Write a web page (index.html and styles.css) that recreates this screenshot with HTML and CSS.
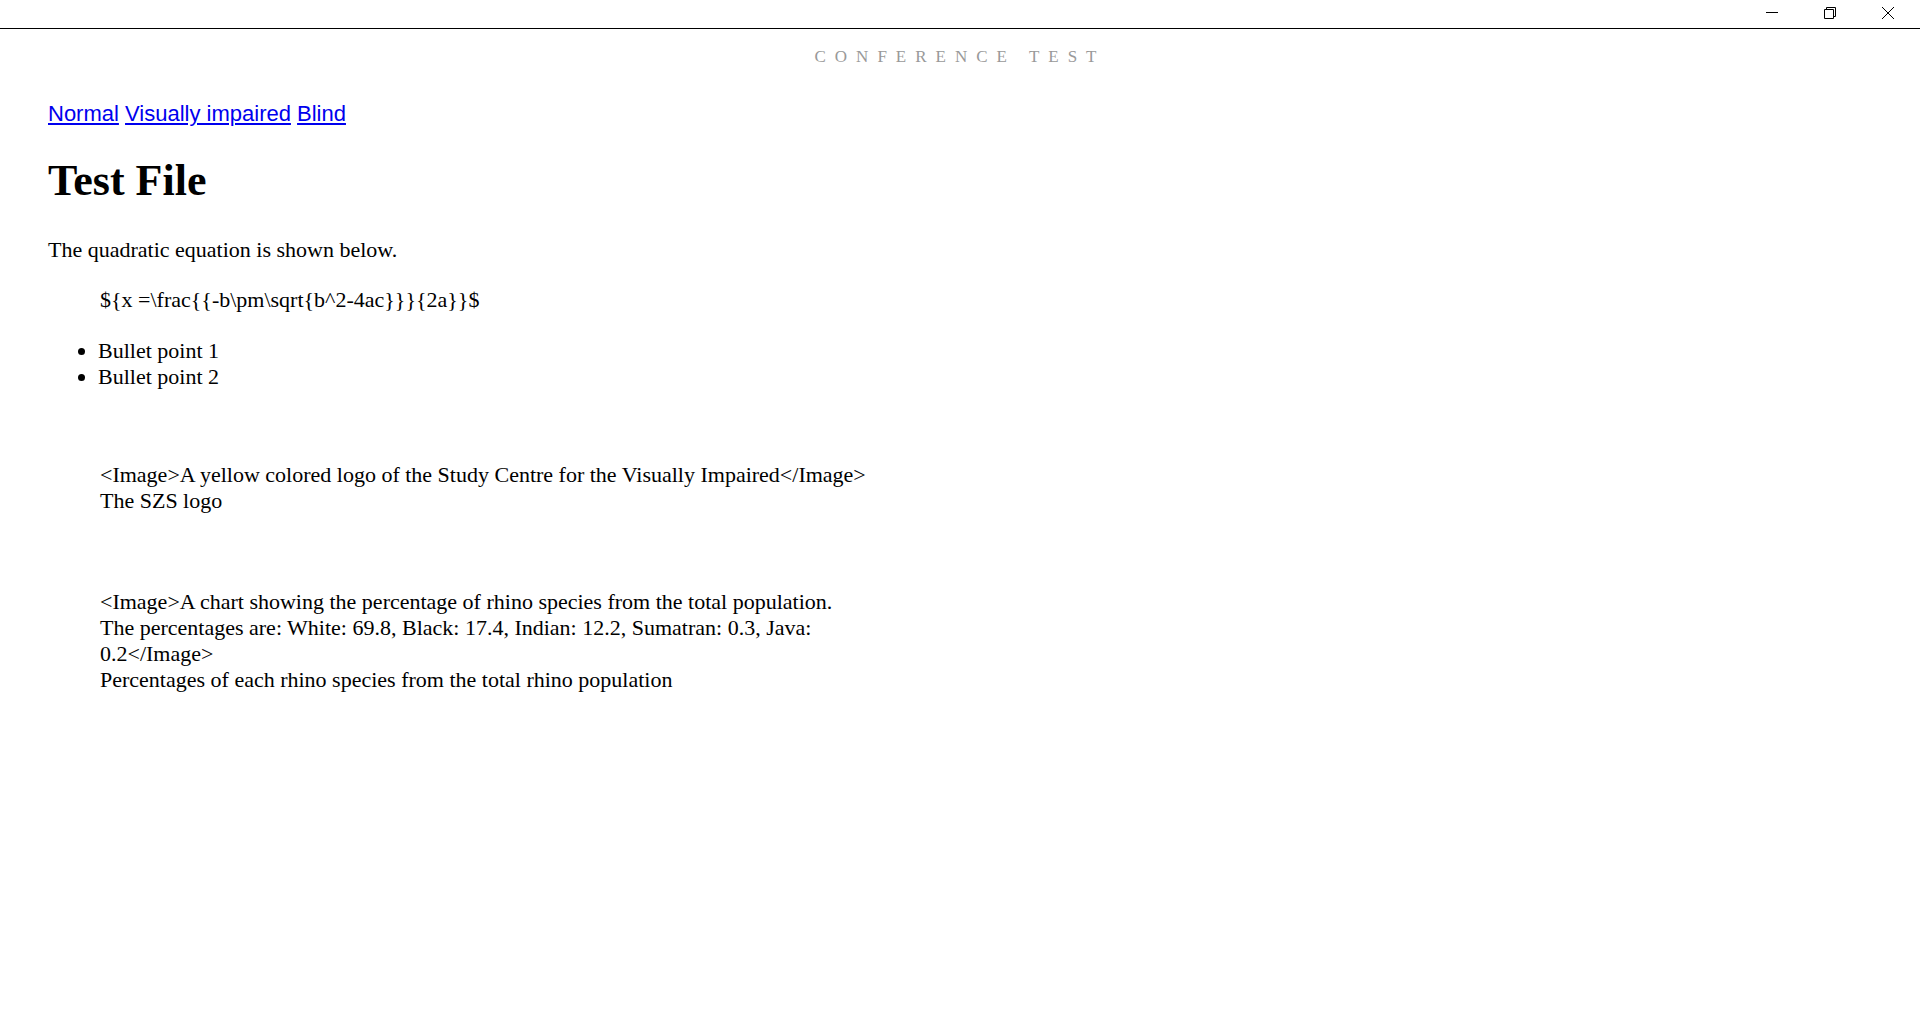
FILE: index.html
```html
<!DOCTYPE html>
<html lang="en">
<head>
<meta charset="utf-8">
<title>Conference Test</title>
<link rel="stylesheet" href="styles.css">
</head>
<body>
<header class="titlebar">
  <button class="window-button" type="button" aria-label="Minimize"><svg width="12" height="12" viewBox="0 0 12 12"><path d="M0 5.5H12"/></svg></button>
  <button class="window-button" type="button" aria-label="Restore"><svg width="12" height="12" viewBox="0 0 12 12"><path d="M.5 2.5H9.5V11.5H.5ZM2.5 2.5V.5H11.5V9.5H9.5"/></svg></button>
  <button class="window-button" type="button" aria-label="Close"><svg width="12" height="12" viewBox="0 0 12 12"><path d="M0 0L12 12M12 0L0 12"/></svg></button>
</header>
<div class="running-title">CONFERENCE TEST</div>
<main class="content">
  <nav class="views"><a href="#normal">Normal</a> <a href="#impaired">Visually impaired</a> <a href="#blind">Blind</a></nav>
  <h1>Test File</h1>
  <p>The quadratic equation is shown below.</p>
  <p class="equation">${x =\frac{{-b\pm\sqrt{b^2-4ac}}}{2a}}$</p>
  <ul>
    <li>Bullet point 1</li>
    <li>Bullet point 2</li>
  </ul>
  <figure>
    <div>&lt;Image&gt;A yellow colored logo of the Study Centre for the Visually Impaired&lt;/Image&gt;</div>
    <figcaption>The SZS logo</figcaption>
  </figure>
  <figure>
    <div>&lt;Image&gt;A chart showing the percentage of rhino species from the total population. The percentages are: White: 69.8, Black: 17.4, Indian: 12.2, Sumatran: 0.3, Java: 0.2&lt;/Image&gt;</div>
    <figcaption>Percentages of each rhino species from the total rhino population</figcaption>
  </figure>
</main>
</body>
</html>
```
FILE: styles.css
```css
body {
  margin: 0;
  background: #fff;
  color: #000;
  font: 22px/26px "Liberation Serif", "Times New Roman", serif;
}

.titlebar {
  display: flex;
  justify-content: flex-end;
  height: 26px;
  padding: 0 3px 2px 0;
  border-bottom: 1px solid #000;
}

.window-button {
  display: flex;
  align-items: center;
  justify-content: center;
  width: 58px;
  padding: 0;
  border: 0;
  background: none;
}

.window-button svg {
  fill: none;
  stroke: #000;
}

.running-title {
  margin-top: 16px;
  color: #999;
  font-size: 17px;
  line-height: 24px;
  letter-spacing: 9px;
  text-align: center;
}

.content {
  width: 50%;
  box-sizing: border-box;
  padding: 32px 48px;
}

.views {
  font-family: "Liberation Sans", Arial, sans-serif;
}

.views a {
  color: #00e;
}

h1 {
  margin: 28px 0 30px;
  font-size: 44px;
  line-height: 52px;
}

p {
  margin: 24px 0;
}

.equation {
  margin-left: 52px;
}

ul {
  margin: 25px 0 72px;
  padding-left: 50px;
}

figure {
  margin: 72px 42px 75px 52px;
}
```
